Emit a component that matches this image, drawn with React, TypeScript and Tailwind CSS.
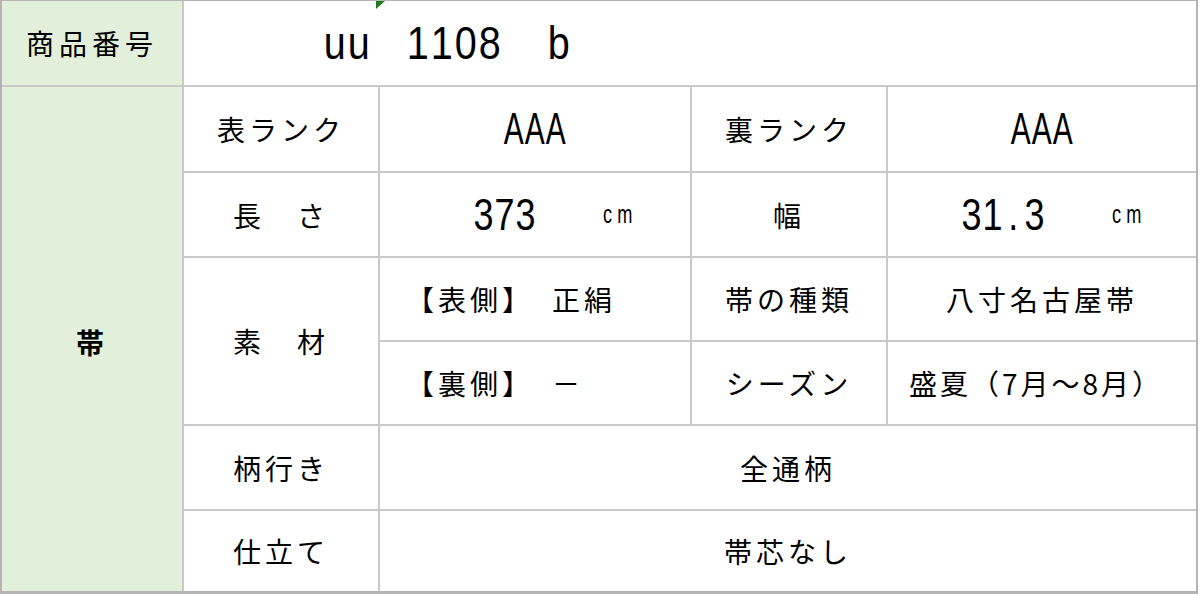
import React from 'react';

// monospace-ish latin: each char sits in a fixed cell, glyph squeezed a bit
function Mono({ text, cell, glyph }: { text: string; cell: string; glyph: string }) {
  return (
    <span className="inline-flex font-['Liberation_Sans',sans-serif] leading-none text-black">
      {text.split('').map((ch, i) => (
        <span key={i} className={`inline-flex justify-center ${cell}`}>
          <span className={`inline-block ${glyph}`}>{ch}</span>
        </span>
      ))}
    </span>
  );
}

const jp = "font-['Noto_Sans_CJK_JP',sans-serif] text-[28px] tracking-[4px] leading-none text-black";

function Cell({ className = '', bg = 'bg-white', children }: { className?: string; bg?: string; children?: React.ReactNode }) {
  return <div className={`flex items-center ${bg} ${className}`}>{children}</div>;
}

export default function App() {
  return (
    <div className="w-[1200px] h-[594px] bg-white">
      <div className="w-[1198px] border-l-2 border-r-2 border-t border-b-[3px] border-[#b4b4b4]">
        <div className="grid grid-cols-[180px_194px_310px_194px_308px] grid-rows-[84px_84px_83px_82px_82px_83px_80px] gap-[2px] bg-[#c9c9c9]">
          {/* row 1 */}
          <Cell bg="bg-[#e2efda]" className="justify-center">
            <span className={`${jp} tracking-[5px]`}>商品番号</span>
          </Cell>
          <Cell className="relative col-span-4 pl-[139px]">
            <span className="absolute left-[192px] top-0 w-[9px] h-[8px] bg-[#1f7a1f] [clip-path:polygon(0_0,100%_0,0_100%)]" />
            <Mono text="uu" cell="w-[24px]" glyph="text-[46px] scale-x-[0.86]" />
            <span className="ml-[35px]">
              <Mono text="1108" cell="w-[24px]" glyph="text-[46px] scale-x-[0.86]" />
            </span>
            <span className="ml-[45px]">
              <Mono text="b" cell="w-[24px]" glyph="text-[46px] scale-x-[0.86]" />
            </span>
          </Cell>

          {/* 帯 column */}
          <Cell bg="bg-[#e2efda]" className="row-span-6 justify-center">
            <span className={`${jp} font-bold mt-[6px]`}>帯</span>
          </Cell>

          {/* row 2 */}
          <Cell className="justify-center">
            <span className={jp}>表ランク</span>
          </Cell>
          <Cell className="justify-center">
            <Mono text="AAA" cell="w-[21px]" glyph="text-[44px] scale-x-[0.68]" />
          </Cell>
          <Cell className="justify-center">
            <span className={jp}>裏ランク</span>
          </Cell>
          <Cell className="justify-center">
            <Mono text="AAA" cell="w-[21px]" glyph="text-[44px] scale-x-[0.68]" />
          </Cell>

          {/* row 3 */}
          <Cell className="justify-center">
            <span className={jp}>長　さ</span>
          </Cell>
          <Cell className="pl-[93px]">
            <Mono text="373" cell="w-[21px]" glyph="text-[45px] scale-x-[0.8]" />
            <span className="ml-[62px]">
              <Mono text="cm" cell="w-[18px]" glyph="text-[26px] scale-x-[0.7]" />
            </span>
          </Cell>
          <Cell className="justify-center">
            <span className={jp}>幅</span>
          </Cell>
          <Cell className="pl-[73px]">
            <Mono text="31.3" cell="w-[21px]" glyph="text-[45px] scale-x-[0.8]" />
            <span className="ml-[62px]">
              <Mono text="cm" cell="w-[18px]" glyph="text-[26px] scale-x-[0.7]" />
            </span>
          </Cell>

          {/* rows 4-5 */}
          <Cell className="row-span-2 justify-center">
            <span className={jp}>素　材</span>
          </Cell>
          <Cell className="pl-[26px]">
            <span className={jp}>【表側】</span>
            <span className={`${jp} ml-[18px]`}>正絹</span>
          </Cell>
          <Cell className="justify-center">
            <span className={jp}>帯の種類</span>
          </Cell>
          <Cell className="justify-center">
            <span className={jp}>八寸名古屋帯</span>
          </Cell>

          <Cell className="pl-[26px]">
            <span className={jp}>【裏側】</span>
            <span className={`${jp} ml-[18px]`}>－</span>
          </Cell>
          <Cell className="justify-center">
            <span className={jp}>シーズン</span>
          </Cell>
          <Cell className="justify-center pr-[12px]">
            <span className="font-['Noto_Sans_CJK_JP',sans-serif] text-[28px] tracking-[3px] leading-none text-black">
              盛夏（7月～8月）
            </span>
          </Cell>

          {/* row 6 */}
          <Cell className="justify-center">
            <span className={jp}>柄行き</span>
          </Cell>
          <Cell className="col-span-3 justify-center">
            <span className={jp}>全通柄</span>
          </Cell>

          {/* row 7 */}
          <Cell className="justify-center">
            <span className={jp}>仕立て</span>
          </Cell>
          <Cell className="col-span-3 justify-center">
            <span className={jp}>帯芯なし</span>
          </Cell>
        </div>
      </div>
    </div>
  );
}
